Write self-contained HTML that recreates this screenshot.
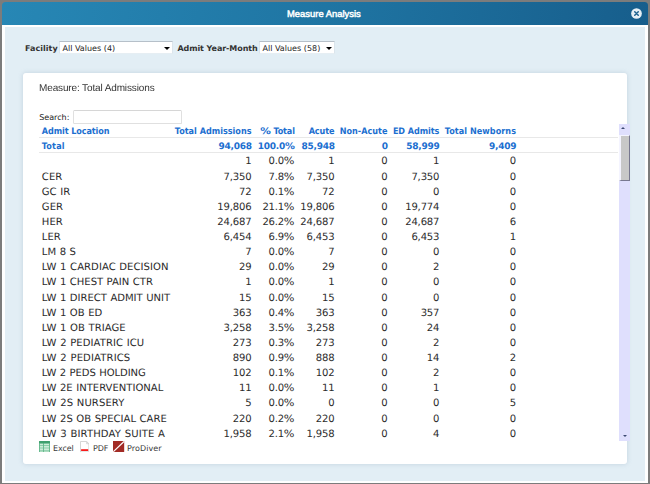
<!DOCTYPE html>
<html><head><meta charset="utf-8"><title>Measure Analysis</title>
<style>
html,body{margin:0;padding:0}
body{width:650px;height:484px;background:#7c7c7c;position:relative;overflow:hidden;font-family:"DejaVu Sans","Liberation Sans",sans-serif;font-size:10.05px;color:#222;text-rendering:geometricPrecision}
#bd{position:absolute;left:1.95px;top:20px;width:646.05px;height:462.9px;background:#fff}
#tb{position:absolute;left:1.5px;top:1.9px;width:646.9px;height:22.9px;border-radius:3.5px 3.5px 0 0;background:linear-gradient(100deg,#2787b5 0%,#1f75a3 50%,#175e8c 100%)}
#tt{position:absolute;left:287px;top:2px;height:23.5px;line-height:24px;white-space:nowrap;color:#fff;font-family:"Liberation Sans",sans-serif;font-weight:normal;-webkit-text-stroke:0.45px #fff;font-size:9.4px;letter-spacing:0.02px}
#cl{position:absolute;left:631.1px;top:7.85px;width:11px;height:11px}
#ct{position:absolute;left:5.2px;top:27.35px;width:639.6px;height:453.85px;background:#e2eef5}
.lbl{position:absolute;font-family:"DejaVu Sans",sans-serif;font-weight:bold;color:#333;font-size:8px;letter-spacing:-0.12px;line-height:12px;white-space:nowrap}
.sel{position:absolute;background:#fff;border:1px solid #dbe5ec;border-top-color:#b6c0c9;border-bottom-color:#e6eef3;box-sizing:border-box;font-size:8px;line-height:11px;white-space:nowrap;color:#222}
.sel span{position:absolute;left:2.2px;top:1.3px;letter-spacing:0.03px}
.sel i{position:absolute;right:2.0px;top:5.0px;width:0;height:0;border-left:3px solid transparent;border-right:3px solid transparent;border-top:3.3px solid #000}
#pn{position:absolute;left:23px;top:72.6px;width:603.9px;height:391.9px;background:#fff;border-radius:3px;box-shadow:0 0 5px rgba(110,140,165,.28)}
#ms{position:absolute;left:38.7px;top:82px;font-family:"Liberation Sans",sans-serif;font-size:10px;letter-spacing:-0.13px;line-height:14px;color:#333;will-change:transform;white-space:nowrap}
#sl{position:absolute;left:39.2px;top:110.5px;font-size:8px;line-height:13px;color:#222;white-space:nowrap}
#si{position:absolute;left:73px;top:110.3px;width:108.7px;height:13.3px;border:1px solid #e0e0e0;border-top-color:#d6d6d6;border-radius:1.5px;box-sizing:border-box;background:#fff}
#tbl{position:absolute;left:0;top:0;width:617px;height:484px}
.r{position:absolute;left:39px;right:0;height:15px;line-height:15px;white-space:nowrap}
.r .c0{position:absolute;left:2.8px;top:0}
.d .c0{word-spacing:0.35px;letter-spacing:0.07px}
.r .n{position:absolute;top:0;text-align:right}
.h,.t{color:#1c6fd0;font-family:"DejaVu Sans Condensed","DejaVu Sans",sans-serif;font-weight:bold;font-size:9px;letter-spacing:-0.13px;}

.ln{position:absolute;left:39px;width:579.3px;height:1px;background:#e8e8e8}
.d{color:#2c2c2c}
.d .n{letter-spacing:-0.17px}
.t .n{font-family:"DejaVu Sans",sans-serif;letter-spacing:-0.25px;margin-right:-0.25px}
.pc{display:inline-block;font-weight:inherit;font-family:"DejaVu Sans",sans-serif;letter-spacing:0;transform-origin:100% 50%}
.d .pc{transform:scaleX(1.12);margin-left:1.2px}
.h .pc{transform:scaleX(1.18);margin-left:2.2px}
.t .pc{transform:scaleX(1.1);margin-left:1px}
#sb{position:absolute;left:618.6px;top:123.5px;width:11px;height:317px;background:#dfdffd}
#th{position:absolute;left:0;top:11.1px;width:11px;height:46.8px;background:#c8c8c8;box-sizing:border-box;border-left:2.1px solid #f4f4ff;border-top:1.2px solid #f4f4ff;border-right:1.4px solid #787890;border-bottom:1.4px solid #787890}
.ar{position:absolute;left:2.9px;width:0;height:0;border-left:2.3px solid transparent;border-right:2.3px solid transparent}
#ft{position:absolute;left:39px;top:442.5px;font-size:8px;line-height:12px;color:#3a3a3a;letter-spacing:-0.1px;white-space:nowrap}
#ft span{position:absolute;top:0}
#ft svg{position:absolute}
</style></head><body>
<div id="bd"></div>
<div id="tb"></div><div id="tt">Measure Analysis</div>
<svg id="cl" viewBox="0 0 11 11"><circle cx="5.5" cy="5.5" r="5.35" fill="#e6eff5"/><path d="M3.75 3.75l3.5 3.5M7.25 3.75l-3.5 3.5" stroke="#1d628f" stroke-width="1.5" stroke-linecap="round"/></svg>
<div id="ct"></div>
<div class="lbl" style="left:25px;top:42.5px;letter-spacing:0.04px">Facility</div>
<div class="sel" style="left:59.2px;top:41.2px;width:114.3px;height:13.2px"><span>All Values (4)</span><i></i></div>
<div class="lbl" style="left:177.4px;top:42.5px;letter-spacing:-0.07px">Admit Year-Month</div>
<div class="sel" style="left:259.2px;top:41.2px;width:75.9px;height:13.2px"><span>All Values (58)</span><i></i></div>
<div id="pn"></div>
<div id="sl">Search:</div><div id="si"></div>
<div id="tbl"><div class="r h" style="top:125px"><span class="c0" style="letter-spacing:-0.09px">Admit Location</span><span class="n" style="right:365.5px;letter-spacing:0.0px;margin-right:-0.0px">Total Admissions</span><span class="n" style="right:322.2px"><b class="pc">%</b> Total</span><span class="n" style="right:282.5px;letter-spacing:-0.1px;margin-right:0.1px">Acute</span><span class="n" style="right:229.5px;letter-spacing:0.01px;margin-right:-0.01px">Non-Acute</span><span class="n" style="right:177.7px;letter-spacing:-0.08px;margin-right:0.08px">ED Admits</span><span class="n" style="right:101px;letter-spacing:0.05px;margin-right:-0.05px">Total Newborns</span></div><div class="r t" style="top:140px"><span class="c0" style="letter-spacing:0.19px">Total</span><span class="n" style="right:365.5px">94,068</span><span class="n" style="right:322.2px">100.0<b class="pc">%</b></span><span class="n" style="right:282.5px">85,948</span><span class="n" style="right:229.5px">0</span><span class="n" style="right:177.7px">58,999</span><span class="n" style="right:101px">9,409</span></div><div class="r d" style="top:154px"><span class="c0"></span><span class="n" style="right:365.5px">1</span><span class="n" style="right:322.2px">0.0<b class="pc">%</b></span><span class="n" style="right:282.5px">1</span><span class="n" style="right:229.5px">0</span><span class="n" style="right:177.7px">1</span><span class="n" style="right:101px">0</span></div><div class="r d" style="top:170px"><span class="c0" style="letter-spacing:0.08px">CER</span><span class="n" style="right:365.5px">7,350</span><span class="n" style="right:322.2px">7.8<b class="pc">%</b></span><span class="n" style="right:282.5px">7,350</span><span class="n" style="right:229.5px">0</span><span class="n" style="right:177.7px">7,350</span><span class="n" style="right:101px">0</span></div><div class="r d" style="top:185px"><span class="c0" style="letter-spacing:0.041px">GC IR</span><span class="n" style="right:365.5px">72</span><span class="n" style="right:322.2px">0.1<b class="pc">%</b></span><span class="n" style="right:282.5px">72</span><span class="n" style="right:229.5px">0</span><span class="n" style="right:177.7px">0</span><span class="n" style="right:101px">0</span></div><div class="r d" style="top:200px"><span class="c0" style="letter-spacing:0.058px">GER</span><span class="n" style="right:365.5px">19,806</span><span class="n" style="right:322.2px">21.1<b class="pc">%</b></span><span class="n" style="right:282.5px">19,806</span><span class="n" style="right:229.5px">0</span><span class="n" style="right:177.7px">19,774</span><span class="n" style="right:101px">0</span></div><div class="r d" style="top:215px"><span class="c0" style="letter-spacing:0.07px">HER</span><span class="n" style="right:365.5px">24,687</span><span class="n" style="right:322.2px">26.2<b class="pc">%</b></span><span class="n" style="right:282.5px">24,687</span><span class="n" style="right:229.5px">0</span><span class="n" style="right:177.7px">24,687</span><span class="n" style="right:101px">6</span></div><div class="r d" style="top:230px"><span class="c0" style="letter-spacing:0.054px">LER</span><span class="n" style="right:365.5px">6,454</span><span class="n" style="right:322.2px">6.9<b class="pc">%</b></span><span class="n" style="right:282.5px">6,453</span><span class="n" style="right:229.5px">0</span><span class="n" style="right:177.7px">6,453</span><span class="n" style="right:101px">1</span></div><div class="r d" style="top:245px"><span class="c0" style="letter-spacing:0.013px">LM 8 S</span><span class="n" style="right:365.5px">7</span><span class="n" style="right:322.2px">0.0<b class="pc">%</b></span><span class="n" style="right:282.5px">7</span><span class="n" style="right:229.5px">0</span><span class="n" style="right:177.7px">0</span><span class="n" style="right:101px">0</span></div><div class="r d" style="top:260px"><span class="c0" style="letter-spacing:0.045px">LW 1 CARDIAC DECISION</span><span class="n" style="right:365.5px">29</span><span class="n" style="right:322.2px">0.0<b class="pc">%</b></span><span class="n" style="right:282.5px">29</span><span class="n" style="right:229.5px">0</span><span class="n" style="right:177.7px">2</span><span class="n" style="right:101px">0</span></div><div class="r d" style="top:275px"><span class="c0" style="letter-spacing:-0.022px">LW 1 CHEST PAIN CTR</span><span class="n" style="right:365.5px">1</span><span class="n" style="right:322.2px">0.0<b class="pc">%</b></span><span class="n" style="right:282.5px">1</span><span class="n" style="right:229.5px">0</span><span class="n" style="right:177.7px">0</span><span class="n" style="right:101px">0</span></div><div class="r d" style="top:291px"><span class="c0" style="letter-spacing:-0.018px">LW 1 DIRECT ADMIT UNIT</span><span class="n" style="right:365.5px">15</span><span class="n" style="right:322.2px">0.0<b class="pc">%</b></span><span class="n" style="right:282.5px">15</span><span class="n" style="right:229.5px">0</span><span class="n" style="right:177.7px">0</span><span class="n" style="right:101px">0</span></div><div class="r d" style="top:306px"><span class="c0" style="letter-spacing:-0.003px">LW 1 OB ED</span><span class="n" style="right:365.5px">363</span><span class="n" style="right:322.2px">0.4<b class="pc">%</b></span><span class="n" style="right:282.5px">363</span><span class="n" style="right:229.5px">0</span><span class="n" style="right:177.7px">357</span><span class="n" style="right:101px">0</span></div><div class="r d" style="top:321px"><span class="c0" style="letter-spacing:0.033px">LW 1 OB TRIAGE</span><span class="n" style="right:365.5px">3,258</span><span class="n" style="right:322.2px">3.5<b class="pc">%</b></span><span class="n" style="right:282.5px">3,258</span><span class="n" style="right:229.5px">0</span><span class="n" style="right:177.7px">24</span><span class="n" style="right:101px">0</span></div><div class="r d" style="top:336px"><span class="c0" style="letter-spacing:0.069px">LW 2 PEDIATRIC ICU</span><span class="n" style="right:365.5px">273</span><span class="n" style="right:322.2px">0.3<b class="pc">%</b></span><span class="n" style="right:282.5px">273</span><span class="n" style="right:229.5px">0</span><span class="n" style="right:177.7px">2</span><span class="n" style="right:101px">0</span></div><div class="r d" style="top:351px"><span class="c0" style="letter-spacing:0.119px">LW 2 PEDIATRICS</span><span class="n" style="right:365.5px">890</span><span class="n" style="right:322.2px">0.9<b class="pc">%</b></span><span class="n" style="right:282.5px">888</span><span class="n" style="right:229.5px">0</span><span class="n" style="right:177.7px">14</span><span class="n" style="right:101px">2</span></div><div class="r d" style="top:366px"><span class="c0" style="letter-spacing:-0.078px">LW 2 PEDS HOLDING</span><span class="n" style="right:365.5px">102</span><span class="n" style="right:322.2px">0.1<b class="pc">%</b></span><span class="n" style="right:282.5px">102</span><span class="n" style="right:229.5px">0</span><span class="n" style="right:177.7px">2</span><span class="n" style="right:101px">0</span></div><div class="r d" style="top:381px"><span class="c0" style="letter-spacing:-0.003px">LW 2E INTERVENTIONAL</span><span class="n" style="right:365.5px">11</span><span class="n" style="right:322.2px">0.0<b class="pc">%</b></span><span class="n" style="right:282.5px">11</span><span class="n" style="right:229.5px">0</span><span class="n" style="right:177.7px">1</span><span class="n" style="right:101px">0</span></div><div class="r d" style="top:396px"><span class="c0" style="letter-spacing:0.09px">LW 2S NURSERY</span><span class="n" style="right:365.5px">5</span><span class="n" style="right:322.2px">0.0<b class="pc">%</b></span><span class="n" style="right:282.5px">0</span><span class="n" style="right:229.5px">0</span><span class="n" style="right:177.7px">0</span><span class="n" style="right:101px">5</span></div><div class="r d" style="top:412px"><span class="c0" style="letter-spacing:0.011px">LW 2S OB SPECIAL CARE</span><span class="n" style="right:365.5px">220</span><span class="n" style="right:322.2px">0.2<b class="pc">%</b></span><span class="n" style="right:282.5px">220</span><span class="n" style="right:229.5px">0</span><span class="n" style="right:177.7px">0</span><span class="n" style="right:101px">0</span></div><div class="r d" style="top:427px"><span class="c0" style="letter-spacing:0.118px">LW 3 BIRTHDAY SUITE A</span><span class="n" style="right:365.5px">1,958</span><span class="n" style="right:322.2px">2.1<b class="pc">%</b></span><span class="n" style="right:282.5px">1,958</span><span class="n" style="right:229.5px">0</span><span class="n" style="right:177.7px">4</span><span class="n" style="right:101px">0</span></div><div class="ln" style="top:136.6px"></div><div class="ln" style="top:151.8px"></div></div>
<div id="sb"><div class="ar" style="top:3.2px;border-bottom:2.4px solid #3c4872"></div><div id="th"></div><div class="ar" style="left:4.2px;bottom:3.2px;border-top:2.4px solid #3c4872"></div></div>
<div id="ft">
<svg style="left:0.1px;top:-1.9px" width="11" height="11.4" viewBox="0 0 11 11.4"><rect width="11" height="11.4" rx="0.6" fill="#62b88b"/><rect width="11" height="2.2" rx="0.6" fill="#3f9f6e"/><g fill="#cdecd9"><rect x="0.9" y="2.7" width="3.2" height="1.7"/><rect x="5" y="2.7" width="5.1" height="1.7"/><rect x="0.9" y="5" width="3.2" height="1.7"/><rect x="5" y="5" width="5.1" height="1.7"/><rect x="0.9" y="7.3" width="3.2" height="1.7"/><rect x="5" y="7.3" width="5.1" height="1.7"/><rect x="0.9" y="9.5" width="3.2" height="1.2"/><rect x="5" y="9.5" width="5.1" height="1.2"/></g></svg>
<span style="left:14px">Excel</span>
<svg style="left:40.8px;top:-1.9px" width="9.4" height="11.4" viewBox="0 0 9.4 11.4"><path d="M0.5 0.5h6.2l2.2 2.2v8.2h-8.4z" fill="#fff" stroke="#d6d6d6"/><path d="M6.6 0.6v2.2h2.2z" fill="#e4e4e4" stroke="#cfcfcf" stroke-width="0.6"/><rect x="1.1" y="8.3" width="7.1" height="1.6" fill="#f80000"/></svg>
<span style="left:54px">PDF</span>
<svg style="left:74.4px;top:-1.9px" width="11.2" height="11" viewBox="0 0 11.2 11"><rect width="11.2" height="11" fill="#a22b25"/><path d="M0.3 10.7L11 0.5" stroke="#fff" stroke-width="1.2"/></svg>
<span style="left:88px;letter-spacing:0.08px">ProDiver</span>
</div>
<div id="ms">Measure: Total Admissions</div>
</body></html>
